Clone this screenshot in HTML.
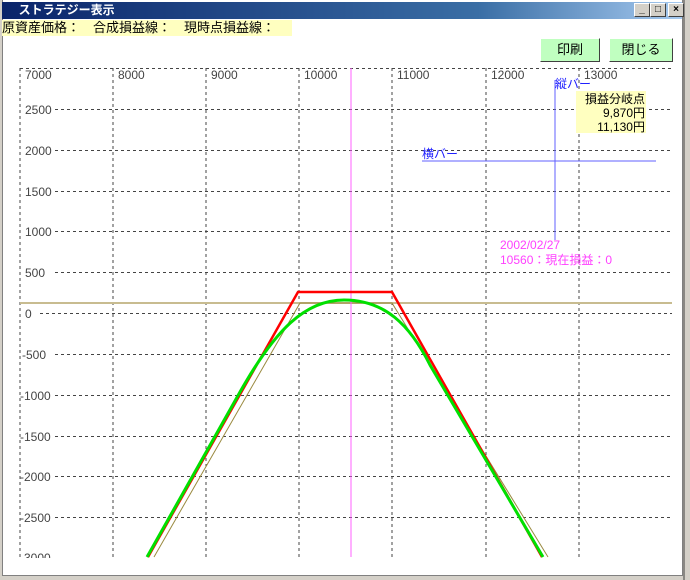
<!DOCTYPE html>
<html><head><meta charset="utf-8"><style>
body{margin:0;width:690px;height:580px;overflow:hidden;background:#d4d0c8;font-family:"Liberation Sans","Noto Sans CJK JP",sans-serif;}
.win{position:absolute;left:2px;top:0;width:679px;height:575px;background:#fff;border-left:1px solid #808080;border-right:1px solid #808080;border-bottom:1px solid #808080;}
.title{position:absolute;left:2px;top:2px;width:680px;height:17px;background:linear-gradient(90deg,#0a246a,#3a6ea5 70%,#a6caf0);color:#fff;font-size:12px;font-weight:bold;line-height:17px;}
.tb{position:absolute;top:3px;width:14px;height:12px;background:#d4d0c8;border:1px solid;border-color:#fff #404040 #404040 #fff;font-size:10px;line-height:11px;text-align:center;color:#000;font-weight:bold}
.yb{position:absolute;left:2px;top:20px;width:290px;height:16px;background:#ffffc0;font-size:13px;line-height:16px;color:#000;}
.btn{position:absolute;top:38px;height:22px;background:#c0ffc0;border:1px solid;border-color:#fff #404040 #404040 #fff;font-size:13px;line-height:22px;text-align:center;}
</style></head><body>
<div class="win"></div>
<div class="title">&nbsp;&nbsp;&nbsp;&nbsp;&nbsp;ストラテジー表示</div>
<div class="tb" style="left:634px">_</div><div class="tb" style="left:650px">□</div><div class="tb" style="left:668px">×</div>
<div class="yb">原資産価格：　合成損益線：　現時点損益線：</div>
<div class="btn" style="left:540px;width:58px">印刷</div>
<div class="btn" style="left:609px;width:62px">閉じる</div>
<svg style="position:absolute;left:0;top:0" width="690" height="580" font-family="Liberation Sans" font-size="12" fill="#444">
<g stroke="#444" stroke-dasharray="3,3" stroke-width="1">
<line x1="20" y1="68" x2="20" y2="557"/><line x1="113" y1="68" x2="113" y2="557"/><line x1="206" y1="68" x2="206" y2="557"/><line x1="299" y1="68" x2="299" y2="557"/><line x1="392" y1="68" x2="392" y2="557"/><line x1="486" y1="68" x2="486" y2="557"/><line x1="579" y1="68" x2="579" y2="557"/>
<line x1="20" y1="68.5" x2="672" y2="68.5"/><line x1="55" y1="109.5" x2="672" y2="109.5"/><line x1="55" y1="150.5" x2="672" y2="150.5"/><line x1="55" y1="191.5" x2="672" y2="191.5"/><line x1="55" y1="231.5" x2="672" y2="231.5"/><line x1="55" y1="272.5" x2="672" y2="272.5"/><line x1="40" y1="313.5" x2="672" y2="313.5"/><line x1="55" y1="354.5" x2="672" y2="354.5"/><line x1="55" y1="395.5" x2="672" y2="395.5"/><line x1="55" y1="436.5" x2="672" y2="436.5"/><line x1="55" y1="476.5" x2="672" y2="476.5"/><line x1="55" y1="517.5" x2="672" y2="517.5"/>
</g>
<g>
<text x="25" y="79">7000</text><text x="118" y="79">8000</text><text x="211" y="79">9000</text><text x="304" y="79">10000</text><text x="397" y="79">11000</text><text x="491" y="79">12000</text><text x="584" y="79">13000</text>
<text x="25" y="114">2500</text><text x="25" y="155">2000</text><text x="25" y="196">1500</text><text x="25" y="236">1000</text><text x="25" y="277">500</text><text x="25" y="318">0</text><text x="22" y="359">-500</text><text x="20" y="400">-1000</text><text x="20" y="441">-1500</text><text x="20" y="481">-2000</text><text x="20" y="522">-2500</text><text x="20" y="562">-3000</text>
</g>
<rect x="3" y="558" width="678" height="17" fill="#fff"/>
<line x1="20" y1="303" x2="672" y2="303" stroke="#c8bc90" stroke-width="2"/>
<polyline points="154,557 300,303 392,303 548,557" fill="none" stroke="#9a8a40" stroke-width="1"/>
<line x1="351" y1="68" x2="351" y2="557" stroke="#ff60ff"/>
<polyline points="148,557 298,292 392,292 542,557" fill="none" stroke="#ff0000" stroke-width="2.5"/>
<path d="M147,557 L240,392 C275,330 305,300 344,300 C385,300 410,325 430,365 L543,557" fill="none" stroke="#00e000" stroke-width="3"/>
<line x1="422" y1="161" x2="656" y2="161" stroke="#6060ff"/>
<line x1="555" y1="80" x2="555" y2="240" stroke="#6060ff"/>
<text x="555" y="88" fill="#2020ff" font-family="Noto Sans CJK JP">縦バー</text>
<text x="422" y="158" fill="#2020ff" font-family="Noto Sans CJK JP">横バー</text>
<rect x="576" y="91" width="70" height="42" fill="#ffffc0"/>
<text x="645" y="103" text-anchor="end" fill="#000" font-family="Noto Sans CJK JP">損益分岐点</text>
<text x="645" y="117" text-anchor="end" fill="#000">9,870円</text>
<text x="645" y="131" text-anchor="end" fill="#000">11,130円</text>
<text x="500" y="249" fill="#ff40ff">2002/02/27</text>
<text x="500" y="264" fill="#ff40ff" font-family="Liberation Sans,Noto Sans CJK JP">10560：現在損益：0</text>
<line x1="684" y1="0" x2="684" y2="580" stroke="#404040"/>
</svg>
</body></html>
